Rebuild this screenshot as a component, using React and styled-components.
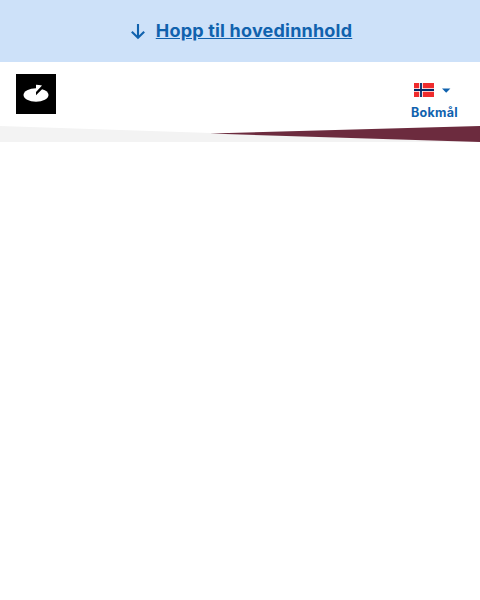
import React from "react";
import styled, { createGlobalStyle } from "styled-components";

const GlobalStyle = createGlobalStyle`
  *, *::before, *::after { box-sizing: border-box; }
  body {
    margin: 0;
    background: #fff;
    font-family: Inter, "Liberation Sans", sans-serif;
  }
`;

const SkipBar = styled.div`
  display: flex;
  align-items: center;
  justify-content: center;
  height: 62px;
  background: #cde1f9;
`;

const SkipLink = styled.a`
  display: flex;
  align-items: center;
  gap: 6px;
  color: #1062ae;
  font-size: 18px;
  font-weight: 700;
  line-height: 28px;
  letter-spacing: 0.2px;
  text-decoration: none;
`;

const SkipText = styled.span`
  text-decoration: underline;
`;

const ArrowIcon = styled.svg`
  width: 24px;
  height: 24px;
  margin-left: -2px;
`;

const Header = styled.header`
  display: flex;
  justify-content: space-between;
  align-items: flex-start;
  height: 64px;
  padding: 12px 16px 0;
`;

const Logo = styled.svg`
  width: 40px;
  height: 40px;
`;

const LanguageButton = styled.button`
  display: flex;
  flex-direction: column;
  align-items: center;
  gap: 7px;
  margin: 9px 6px 0 0;
  padding: 0;
  border: 0;
  background: none;
  color: #1062ae;
  font: 700 12.5px/18px Inter, "Liberation Sans", sans-serif;
  letter-spacing: 0.3px;
`;

const FlagRow = styled.span`
  display: flex;
  align-items: center;
  gap: 8px;
  margin-right: 5px;
`;

const Flag = styled.svg`
  width: 20px;
  height: 14px;
`;

const Caret = styled.svg`
  width: 9px;
  height: 5px;
  margin-right: -1px;
`;

const Divider = styled.svg`
  display: block;
  width: 100%;
  height: 16px;
`;

export default function App() {
  return (
    <>
      <GlobalStyle />
      <SkipBar>
        <SkipLink href="#main">
          <ArrowIcon viewBox="0 0 24 24" fill="none" stroke="currentColor" strokeWidth="2.1">
            <path d="M12 5v14M5.8 12.7l6.2 6 6.2-6" />
          </ArrowIcon>
          <SkipText>Hopp til hovedinnhold</SkipText>
        </SkipLink>
      </SkipBar>
      <Header>
        <Logo viewBox="0 0 40 40" role="img" aria-label="Logo">
          <rect width="40" height="40" fill="#000" />
          <ellipse cx="20" cy="21" rx="12.5" ry="6.8" fill="#fff" />
          <path d="M20 21.3v-7.6h6.6v1z" fill="#000" />
          <path d="M20 10.8q3 0 6 .7L20 18z" fill="#fff" />
        </Logo>
        <LanguageButton>
          <FlagRow>
            <Flag viewBox="0 0 20 14">
              <rect width="20" height="14" fill="#ef2b2d" />
              <path d="M5.2 0h3.6v14H5.2zM0 5.2h20v3.6H0z" fill="#fff" />
              <path d="M6.1 0h1.8v14H6.1zM0 6.1h20v1.8H0z" fill="#002868" />
            </Flag>
            <Caret viewBox="0 0 9 5">
              <path d="M0 .5h8.4L4.2 4.8z" fill="currentColor" />
            </Caret>
          </FlagRow>
          Bokmål
        </LanguageButton>
      </Header>
      <Divider viewBox="0 0 480 16" preserveAspectRatio="none">
        <path d="M0 0L480 16H0z" fill="#f3f3f3" />
        <path d="M210 7.5L480 0v16z" fill="#6c2b3e" />
      </Divider>
    </>
  );
}
